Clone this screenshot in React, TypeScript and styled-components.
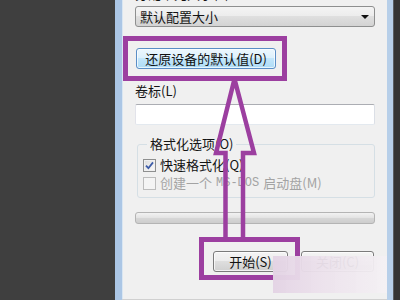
import React from "react";
import styled, { createGlobalStyle } from "styled-components";

const GlobalStyle = createGlobalStyle`
  html, body {
    margin: 0;
    padding: 0;
    width: 400px;
    height: 300px;
    overflow: hidden;
    background: #404040;
  }
  body {
    font-family: "Noto Sans CJK SC", "Noto Sans", sans-serif;
  }
  * { box-sizing: border-box; }
`;

const Screen = styled.div`
  position: relative;
  display: flex;
  width: 400px;
  height: 300px;
  overflow: hidden;
`;

const Desktop = styled.div`
  width: 115px;
  flex: none;
  background: #3f3f3f;
`;

const RightDesktop = styled.div`
  flex: 1;
  background: #343434;
  border-left: 1px solid #5a5e63;
`;

const Window = styled.div`
  width: 278px;
  flex: none;
  border-left: 7px solid #abc6e5;
  border-right: 6px solid #b7cfe9;
  box-shadow: inset 1px 0 0 #d9e6f2;
  background: #f0f0f0;
`;

const Panel = styled.div`
  display: flex;
  flex-direction: column;
  height: 100%;
  padding: 0 12px 0 13px;
  font-size: 13px;
  color: #141414;
  border-bottom: 1px solid #d0d0d0;
`;

const FieldLabel = styled.div<{ $top: number }>`
  height: 16px;
  line-height: 16px;
  margin-top: ${(p) => p.$top}px;
  white-space: nowrap;
`;

const Select = styled.div`
  margin-top: 4px;
  height: 21px;
  display: flex;
  align-items: center;
  justify-content: space-between;
  padding: 0 5px 0 4px;
  border: 1px solid #8e8f8f;
  border-radius: 3px;
  background: linear-gradient(#f4f4f4, #ececec 50%, #dfdfdf 50%, #d3d3d3);
  line-height: 16px;
`;

const Caret = styled.span`
  width: 0;
  height: 0;
  border-left: 4px solid transparent;
  border-right: 4px solid transparent;
  border-top: 4px solid #111;
`;

const Button = styled.button<{ $width: number; $hot?: boolean; $top?: number }>`
  width: ${(p) => p.$width}px;
  height: 21px;
  margin: 0;
  margin-top: ${(p) => p.$top ?? 0}px;
  padding: 0;
  font-family: inherit;
  font-size: 13px;
  line-height: 16px;
  color: #111;
  border-radius: 3px;
  border: 1px solid ${(p) => (p.$hot ? "#5a8ec6" : "#7b7b7b")};
  background: ${(p) =>
    p.$hot
      ? "linear-gradient(#edf7fd, #dcf0fc 50%, #c3e6fb 50%, #aedcf6)"
      : "linear-gradient(#f4f4f4, #ececec 50%, #dedede 50%, #d0d0d0)"};
  box-shadow: inset 0 0 0 1px rgba(255, 255, 255, 0.7);
  white-space: nowrap;
`;

const RestoreButton = styled(Button)`
  align-self: flex-start;
  margin-left: 1px;
`;

const TextInput = styled.div`
  margin-top: 5px;
  height: 21px;
  background: #fff;
  border: 1px solid;
  border-color: #abadb3 #dbdfe6 #e3e9ef #e2e3ea;
  border-radius: 2px;
`;

const Group = styled.fieldset`
  margin: 11px 0 0 2px;
  padding: 4px 0 5px 5px;
  border: 1px solid #d5dfe5;
  border-radius: 3px;
  min-width: 0;
`;

const Legend = styled.legend`
  margin-left: 4px;
  padding: 0 3px;
  height: 16px;
  line-height: 16px;
  font-size: 13px;
`;

const CheckRow = styled.div<{ $disabled?: boolean }>`
  display: flex;
  align-items: center;
  gap: 4px;
  height: 18px;
  line-height: 16px;
  white-space: nowrap;
  color: ${(p) => (p.$disabled ? "#a3a3a3" : "#141414")};
`;

const Box = styled.span<{ $disabled?: boolean }>`
  width: 13px;
  height: 13px;
  flex: none;
  display: flex;
  align-items: center;
  justify-content: center;
  border: 1px solid ${(p) => (p.$disabled ? "#bcbcbc" : "#8e8f8f")};
  background: ${(p) =>
    p.$disabled ? "#f4f4f4" : "linear-gradient(135deg, #dcdcdc, #fbfbfb)"};
  box-shadow: inset 0 0 0 1px ${(p) => (p.$disabled ? "#f4f4f4" : "#f0f0f0")};
`;

const Mono = styled.span`
  font-family: "Liberation Mono", monospace;
  font-size: 12px;
`;

const Progress = styled.div`
  margin-top: 14px;
  height: 12px;
  border: 1px solid #b4b4b4;
  border-radius: 3px;
  background: linear-gradient(#f2f2f2, #e4e4e4 45%, #d6d6d6 55%, #cdcdcd);
`;

const ButtonRow = styled.div`
  margin-top: 27px;
  display: flex;
  justify-content: flex-end;
  gap: 13px;
  padding-right: 1px;
`;

const Overlay = styled.svg`
  position: absolute;
  left: 0;
  top: 0;
  width: 400px;
  height: 300px;
  pointer-events: none;
`;

const Watermark = styled.div`
  position: absolute;
  left: 273px;
  top: 256px;
  width: 114px;
  height: 37px;
  background: linear-gradient(
    90deg,
    rgba(227, 211, 228, 0.97),
    rgba(236, 226, 236, 0.96) 45%,
    rgba(243, 240, 243, 0.95)
  );
  filter: blur(0.6px);
`;

const PURPLE = "#9c3fa0";

export default function App() {
  return (
    <>
      <GlobalStyle />
      <Screen>
        <Desktop />
        <Window>
          <Panel>
            <FieldLabel $top={-14}>分配单元大小(A)</FieldLabel>
            <Select>
              <span>默认配置大小</span>
              <Caret />
            </Select>
            <RestoreButton $width={140} $hot $top={21}>
              还原设备的默认值(D)
            </RestoreButton>
            <FieldLabel $top={14}>卷标(L)</FieldLabel>
            <TextInput />
            <Group>
              <Legend>格式化选项(O)</Legend>
              <CheckRow>
                <Box>
                  <svg width="9" height="9" viewBox="0 0 9 9">
                    <path
                      d="M1 4.6 L3.4 7.2 L8 1.4"
                      fill="none"
                      stroke="#3d5ca8"
                      strokeWidth="1.8"
                    />
                  </svg>
                </Box>
                快速格式化(Q)
              </CheckRow>
              <CheckRow $disabled>
                <Box $disabled />
                创建一个 <Mono>MS-DOS</Mono> 启动盘(M)
              </CheckRow>
            </Group>
            <Progress />
            <ButtonRow>
              <Button $width={75}>开始(S)</Button>
              <Button $width={73}>关闭(C)</Button>
            </ButtonRow>
          </Panel>
        </Window>
        <RightDesktop />
        <Overlay viewBox="0 0 400 300">
          <rect
            x="125.5"
            y="38.5"
            width="159"
            height="40"
            fill="none"
            stroke={PURPLE}
            strokeWidth="5"
          />
          <rect
            x="201.5"
            y="239.5"
            width="96"
            height="38"
            fill="none"
            stroke={PURPLE}
            strokeWidth="5"
          />
          <polyline
            points="225.5,238 225.5,153 216,153 234.5,79 254,153 243,153 243,238"
            fill="none"
            stroke={PURPLE}
            strokeWidth="4.5"
            strokeLinejoin="miter"
          />
        </Overlay>
        <Watermark />
      </Screen>
    </>
  );
}
